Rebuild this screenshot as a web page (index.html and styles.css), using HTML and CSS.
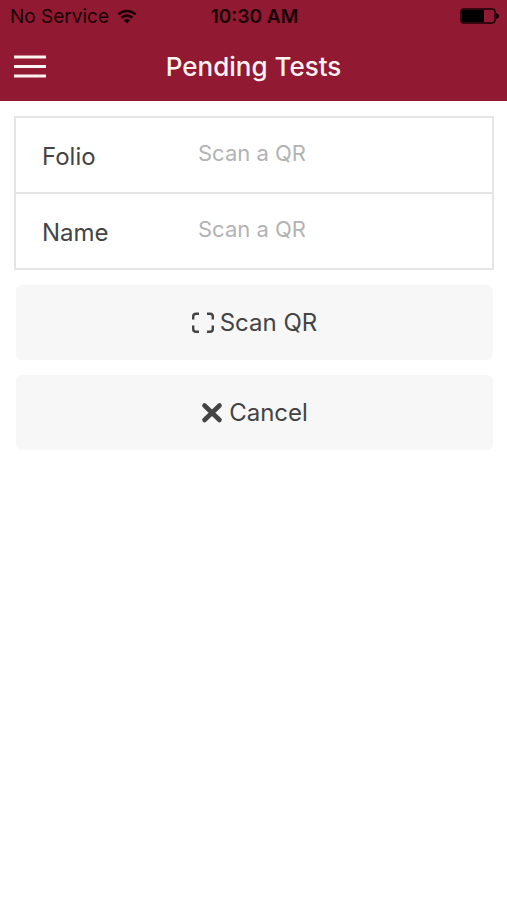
FILE: index.html
```html
<!DOCTYPE html>
<html lang="en">
<head>
<meta charset="utf-8">
<meta name="viewport" content="width=device-width, initial-scale=1">
<title>Pending Tests</title>
<link rel="stylesheet" href="styles.css">
</head>
<body>
<header class="header">
  <div class="status">
    <div class="status-left">
      <span>No Service</span>
      <svg class="wifi" viewBox="0 0 20 15" aria-hidden="true">
        <path d="M1.4 5.4a12.4 12.4 0 0 1 17.2 0M4.5 8.8a8 8 0 0 1 11 0" fill="none" stroke="currentColor" stroke-width="2.6"/>
        <path d="M10 14.6 6.7 11.2a4.8 4.8 0 0 1 6.6 0z" fill="currentColor"/>
      </svg>
    </div>
    <time class="clock">10:30 AM</time>
    <div class="status-right">
      <svg class="battery" viewBox="0 0 39 16" aria-hidden="true">
        <rect x="1" y="1" width="34" height="14" rx="3" fill="none" stroke="currentColor" stroke-width="1.4"/>
        <rect x="2" y="2" width="22" height="12" rx="1" fill="#000"/>
        <path d="M36 5c2 .5 3 1.500 3 3s-1 2.500-3 3z" fill="currentColor"/>
      </svg>
    </div>
  </div>
  <div class="navbar">
    <button class="menu" type="button" aria-label="Menu">
      <svg viewBox="0 0 32 24" aria-hidden="true">
        <path d="M0 2h32M0 11.500h32M0 21h32" stroke="currentColor" stroke-width="3"/>
      </svg>
    </button>
    <h1 class="title">Pending Tests</h1>
  </div>
</header>
<main class="content">
  <form class="form">
    <div class="fields">
      <div class="field">
        <label for="folio">Folio</label>
        <input id="folio" type="text" placeholder="Scan a QR">
      </div>
      <div class="field">
        <label for="name">Name</label>
        <input id="name" type="text" placeholder="Scan a QR">
      </div>
    </div>
    <button class="action" type="button">
      <svg class="icon" viewBox="0 0 22 22" aria-hidden="true">
        <path d="M1.200 7.500V4.500Q1.200 1.800 4 1.800H7M15 1.800h3Q20.800 1.800 20.800 4.500V7.500M20.800 13.500v3.500Q20.800 19.800 18 19.800H15M7 19.800H4Q1.200 19.800 1.200 17V13.500" fill="none" stroke="currentColor" stroke-width="2.400"/>
      </svg>
      <span>Scan QR</span>
    </button>
    <button class="action" type="button">
      <svg class="icon" viewBox="0 0 22 22" aria-hidden="true">
        <path d="M3.500 3.500l15 14.500M18.500 3.500l-15 14.500" stroke="currentColor" stroke-width="4.600" stroke-linecap="round"/>
      </svg>
      <span>Cancel</span>
    </button>
  </form>
</main>
</body>
</html>
```
FILE: styles.css
```css
* {
  box-sizing: border-box;
}

body {
  margin: 0;
  background: #fff;
  color: #444;
  font-family: Inter, "Liberation Sans", sans-serif;
  font-size: 24px;
}

button,
input {
  font: inherit;
  color: inherit;
}

.header {
  background: #911931;
}

.status,
.navbar {
  display: grid;
  grid-template-columns: 1fr auto 1fr;
  align-items: center;
}

.status {
  height: 32px;
  padding: 0 8px 0 10px;
  color: #180006;
  font-size: 19px;
}

.status-left {
  display: flex;
  align-items: center;
  gap: 8px;
}

.wifi {
  width: 20px;
  height: 15px;
}

.clock {
  font-weight: 600;
}

.status-right {
  display: flex;
  justify-content: flex-end;
}

.battery {
  width: 39px;
  height: 16px;
}

.navbar {
  height: 69px;
  padding: 0 14px;
  color: #fff3f1;
}

.menu {
  justify-self: start;
  padding: 0;
  border: 0;
  background: none;
}

.menu svg {
  display: block;
  width: 32px;
  height: 24px;
}

.title {
  margin: 0;
  font-size: 26px;
  font-weight: 500;
}

.content {
  padding: 15px 13px 15px 14px;
}

.form {
  display: flex;
  flex-direction: column;
  gap: 15px;
}

.fields {
  border: 2px solid #e5e5e5;
}

.field {
  display: grid;
  grid-template-columns: 1fr 2fr;
  height: 74px;
  padding-left: 26px;
}

.field + .field {
  height: 76px;
  border-top: 2px solid #e5e5e5;
}

.field label {
  align-self: center;
  padding-top: 2px;
}

.field input {
  width: 100%;
  padding: 0 6px 5px;
  border: 0;
  outline: 0;
  background: none;
  font-size: 22px;
}

.field input::placeholder {
  color: #b3b3b3;
  opacity: 1;
}

.action {
  display: flex;
  align-items: center;
  justify-content: center;
  gap: 6px;
  height: 75px;
  margin: 0 1px 0 2px;
  border: 0;
  border-radius: 6px;
  background: #f7f7f7;
}

.icon {
  width: 22px;
  height: 22px;
}
```
